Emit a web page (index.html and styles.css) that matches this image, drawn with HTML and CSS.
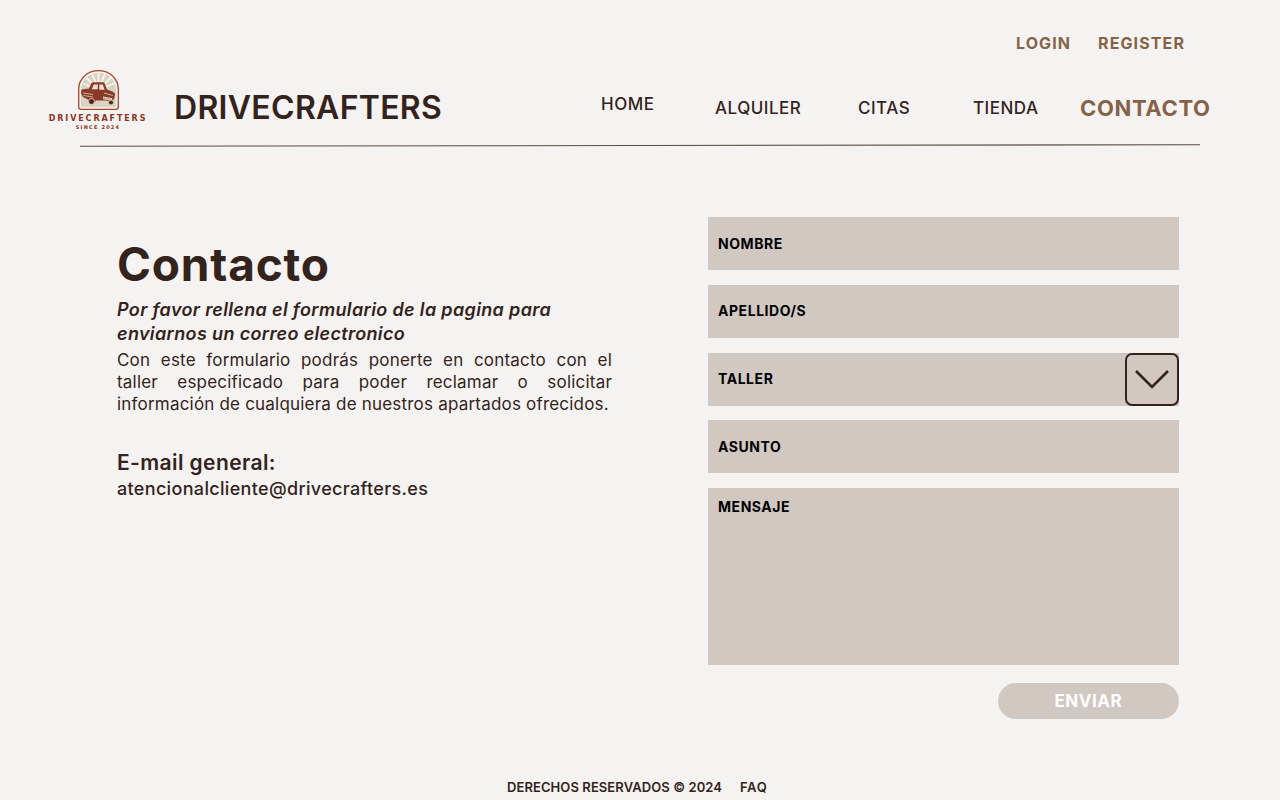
FILE: index.html
```html
<!DOCTYPE html>
<html lang="es">
<head>
<meta charset="utf-8">
<title>Drivecrafters - Contacto</title>
<link rel="stylesheet" href="styles.css">
</head>
<body>
<div class="page">
  <header class="header">
    <div class="auth">
      <a class="auth-link">LOGIN</a>
      <a class="auth-link">REGISTER</a>
    </div>
    <div class="mainbar">
      <div class="logo">
        <svg class="badge" viewBox="0 0 41 40" aria-hidden="true">
          <path d="M.7 37V19C.7 8.500 9.500.7 20.500.7S40.300 8.500 40.300 19v18c0 1.400-.9 2.300-2.300 2.300H3c-1.400 0-2.300-.9-2.300-2.300z" fill="#f3efe6" stroke="#a8452f" stroke-width="1.300"/>
          <path d="M3 36V20C3 10 11 3 20.500 3S38 10 38 20v16c0 .8-.5 1-1 1H4c-.5 0-1-.2-1-1z" fill="#d9d3c4"/>
          <path d="M20.500 20 7 6.500M20.500 20 14 3.500M20.500 20V3M20.500 20 27 3.500M20.500 20 34 6.500M20.500 20 4 13M20.500 20 37 13" stroke="#f8f5ec" stroke-width="1.900"/>
          <path d="M3.500 19.500l7.500-1 2.500-5.500 1.500-.7h10l1.500.8 2.500 6.300 6 2.300 2 1.700-.6 4.800-2 3-3 .6-3-1.200H18l-2.500 2.500H12l-2-3.500-5-2.500-2-3.500z" fill="#8b3a28"/>
          <path d="M15.800 14.500h4v4.700h-6zM21.300 14.500h3.500l1.800 5.300h-5.300z" fill="#e9e2d4"/>
          <path d="M5 23l10 1.500M5.500 25.500l9.500 1.500M26 23l9 2.500" stroke="#e9e2d4" stroke-width=".7" fill="none"/>
          <path d="M25 26.500l9.500 1.800-1 2.600-8.500-1.600z" fill="#e9e2d4"/>
          <path d="M26 27.300v2M28 27.700v2M30 28v2M32 28.500v1.800" stroke="#8b3a28" stroke-width=".6"/>
          <circle cx="13.500" cy="31.500" r="3" fill="#5a2418" stroke="#e9e2d4" stroke-width=".8"/>
          <circle cx="33" cy="32.500" r="2.500" fill="#5a2418" stroke="#e9e2d4" stroke-width=".8"/>
        </svg>
        <div class="logo-name">DRIVECRAFTERS</div>
        <div class="logo-since">SINCE 2024</div>
      </div>
      <div class="brand">DRIVECRAFTERS</div>
      <nav class="nav">
        <a class="nav-link nav-home">HOME</a>
        <a class="nav-link nav-alquiler">ALQUILER</a>
        <a class="nav-link nav-citas">CITAS</a>
        <a class="nav-link nav-tienda">TIENDA</a>
        <a class="nav-link nav-active">CONTACTO</a>
      </nav>
    </div>
    <div class="rule"></div>
  </header>

  <main class="content">
    <section class="intro">
      <h1 class="title">Contacto</h1>
      <p class="lead">Por favor rellena el formulario de la pagina para<br>enviarnos un correo electronico</p>
      <p class="body-text">Con este formulario podrás ponerte en contacto con el taller especificado para poder reclamar o solicitar información de cualquiera de nuestros apartados ofrecidos.</p>
      <h2 class="mail-title">E-mail general:</h2>
      <p class="mail">atencionalcliente@drivecrafters.es</p>
    </section>

    <form class="form">
      <div class="field"><span class="label">NOMBRE</span></div>
      <div class="field"><span class="label">APELLIDO/S</span></div>
      <div class="field field-select">
        <span class="label">TALLER</span>
        <span class="select-btn">
          <svg viewBox="0 0 34 22" width="34" height="22" aria-hidden="true"><path d="M1 3 L17 19 L33 3" fill="none" stroke="#33231c" stroke-width="2.600"/></svg>
        </span>
      </div>
      <div class="field"><span class="label">ASUNTO</span></div>
      <div class="field field-area"><span class="label">MENSAJE</span></div>
      <div class="actions"><button class="send" type="button">ENVIAR</button></div>
    </form>
  </main>

  <footer class="footer">
    <span>DERECHOS RESERVADOS © 2024</span>
    <span class="faq">FAQ</span>
  </footer>
</div>
</body>
</html>
```

FILE: styles.css
```css
* { box-sizing: border-box; }
html, body { margin: 0; padding: 0; }
body {
  background: #f5f3f1;
  color: #33231c;
  font-family: Inter, "Open Sans", sans-serif;
}
.page {
  width: 1280px;
  height: 800px;
  display: flex;
  flex-direction: column;
  overflow: hidden;
}
.header { height: 146px; display: flex; flex-direction: column; }
.auth {
  display: flex;
  justify-content: flex-end;
  gap: 27px;
  padding: 34px 95px 0 0;
  height: 66px;
}
.auth-link {
  color: #846349;
  font-size: 16px;
  line-height: 19px;
  font-weight: 700;
  letter-spacing: 1.100px;
}
.mainbar { display: flex; align-items: flex-start; height: 78px; }
.logo {
  width: 98px;
  margin-left: 49px;
  margin-top: 4px;
  display: flex;
  flex-direction: column;
  align-items: center;
}
.badge { display: block; width: 41px; height: 40px; }
.logo-name {
  margin-top: 4px;
  color: #8b3324;
  font-family: "DejaVu Sans", sans-serif;
  font-size: 8px;
  line-height: 10px;
  font-weight: 700;
  letter-spacing: 1.9px;
  white-space: nowrap;
}
.logo-since {
  color: #8b3324;
  font-family: "DejaVu Sans", sans-serif;
  font-size: 5px;
  line-height: 6px;
  font-weight: 700;
  letter-spacing: 1.2px;
  white-space: nowrap;
}
.brand {
  width: 269px;
  margin-left: 27px;
  margin-top: 23px;
  font-size: 32px;
  line-height: 38px;
  font-weight: 600;
  letter-spacing: 0.3px;
  white-space: nowrap;
}
.nav { position: relative; flex: 1; height: 78px; }
.nav-link {
  position: absolute;
  font-size: 17px;
  line-height: 20px;
  font-weight: 500;
  letter-spacing: 0.5px;
  white-space: nowrap;
}
.nav-home { left: 158px; top: 28px; }
.nav-alquiler { left: 272px; top: 32px; }
.nav-citas { left: 415px; top: 32px; }
.nav-tienda { left: 530px; top: 32px; }
.nav-active {
  left: 637px;
  top: 29px;
  color: #846349;
  font-size: 22px;
  line-height: 26px;
  font-weight: 700;
  letter-spacing: 0.65px;
}
.rule {
  width: 1120px;
  height: 1.500px;
  margin: 1px 0 0 80px;
  background: linear-gradient(90deg, #5a4a42, #5a4a42 50%, #33231c 85%, #5a4a42);
  transform: rotate(-0.07deg);
}
.content { flex: 1; display: flex; align-items: flex-start; }
.intro { width: 495px; margin: 91px 0 0 117px; }
.title {
  margin: 0;
  font-size: 46px;
  line-height: 54px;
  font-weight: 700;
  letter-spacing: 0.8px;
}
.lead {
  margin: 7px 0 0;
  font-size: 18px;
  line-height: 24px;
  font-weight: 600;
  font-style: italic;
  letter-spacing: 0.35px;
}
.body-text {
  margin: 3px 0 0;
  font-size: 17px;
  line-height: 22px;
  letter-spacing: 0.2px;
  text-align: justify;
}
.mail-title {
  margin: 36px 0 0;
  font-size: 21px;
  line-height: 24px;
  font-weight: 600;
  letter-spacing: 0.4px;
}
.mail {
  margin: 2px 0 0;
  font-size: 18px;
  line-height: 24px;
  font-weight: 500;
  letter-spacing: 0.33px;
}
.form {
  width: 471.500px;
  margin: 71px 0 0 95.500px;
  display: flex;
  flex-direction: column;
  gap: 14.750px;
}
.field {
  position: relative;
  height: 53px;
  background: #d2c8c2;
  display: flex;
  align-items: center;
  padding: 0 0 1px 10.500px;
}
.field-area { height: 177px; align-items: flex-start; padding-top: 9.500px; }
.label {
  color: #000;
  font-size: 14px;
  line-height: 17px;
  font-weight: 700;
  letter-spacing: 0.55px;
}
.select-btn {
  position: absolute;
  right: 0;
  top: 0;
  width: 54px;
  height: 53px;
  border: 2.800px solid #33231c;
  border-radius: 7px;
  display: flex;
  align-items: center;
  justify-content: center;
}
.actions { display: flex; justify-content: flex-end; margin-top: 3px; }
.send {
  width: 181.500px;
  height: 36px;
  border: 0;
  border-radius: 18px;
  background: #d2c8c2;
  color: #fff;
  font-family: inherit;
  font-size: 17px;
  font-weight: 700;
  letter-spacing: 0.5px;
}
.footer {
  height: 30px;
  display: flex;
  gap: 18px;
  padding: 9px 0 0 507px;
  font-size: 13px;
  line-height: 16px;
  font-weight: 600;
  letter-spacing: 0.08px;
}
.faq { letter-spacing: 0.6px; }
```
